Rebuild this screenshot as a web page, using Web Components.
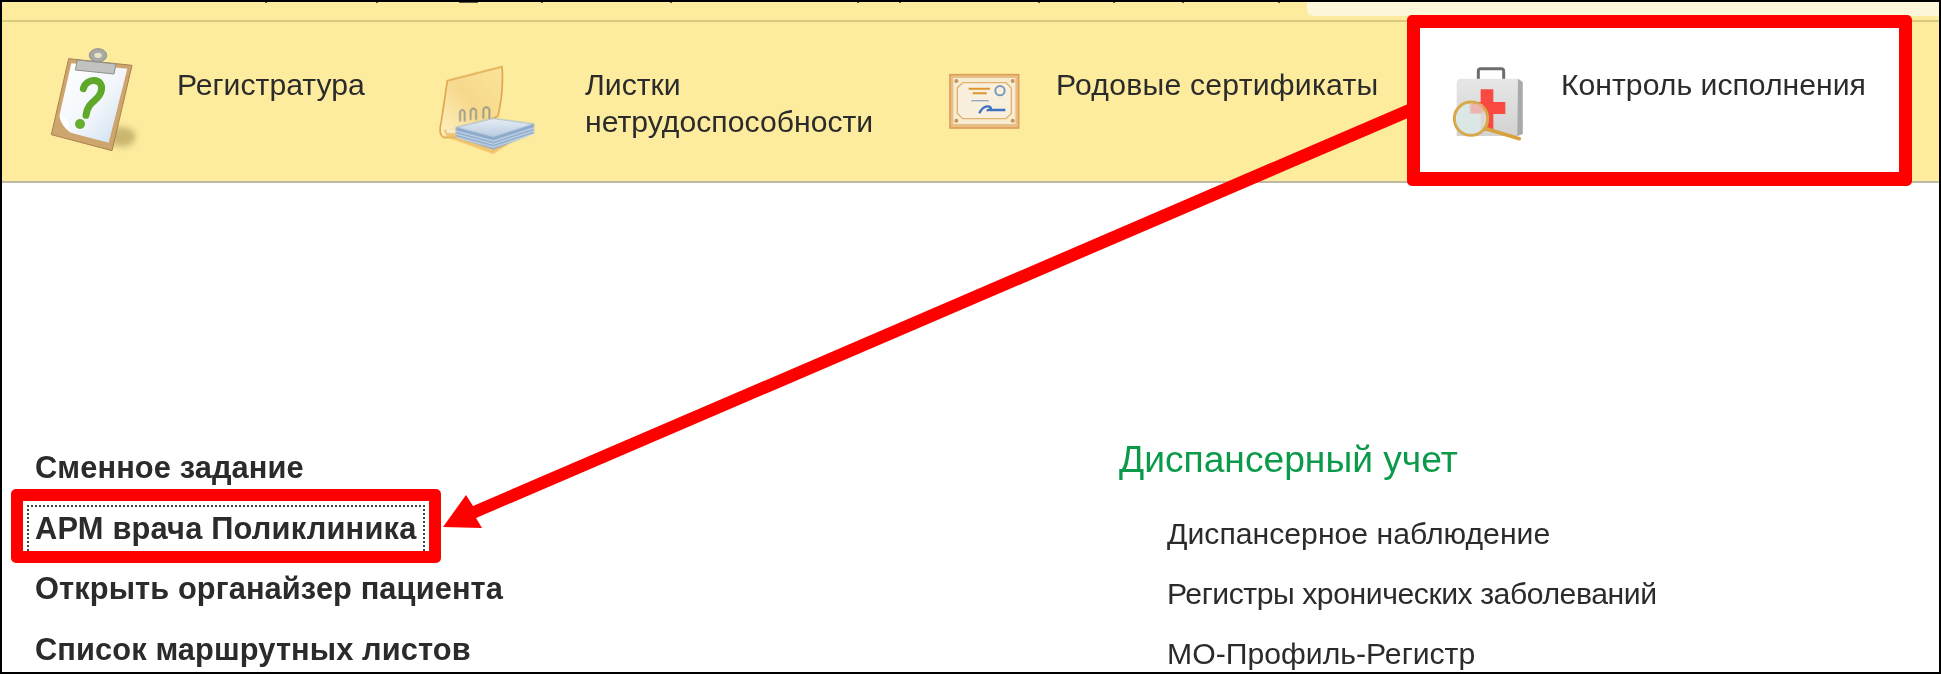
<!DOCTYPE html>
<html lang="ru"><head><meta charset="utf-8"><title>Контроль исполнения</title>
<style>
html,body{margin:0;background:#fff}
body{font-family:"Liberation Sans",Arial,sans-serif;color:#2b2b2b}
</style></head>
<body>
<app-frame>
  <top-strip></top-strip>
  <section-bar>
    <section-item basis="410" gap="27" top="18" label="Регистратура">
      <svg slot="icon" width="130" height="120" viewBox="0 0 390 360">
        <defs>
          <linearGradient id="pa" x1="0" y1="0" x2="1" y2="1"><stop offset="0" stop-color="#fff"/><stop offset=".55" stop-color="#f2f6fb"/><stop offset="1" stop-color="#c9ddee"/></linearGradient>
          <filter id="b1" x="-10%" y="-10%" width="120%" height="120%"><feGaussianBlur stdDeviation="2.2"/></filter>
          <filter id="b2" x="-30%" y="-30%" width="160%" height="160%"><feGaussianBlur stdDeviation="9"/></filter>
        </defs>
        <ellipse cx="305" cy="290" rx="42" ry="30" fill="#b9a461" opacity=".75" filter="url(#b2)"/>
        <g filter="url(#b1)">
          <path d="M146 56 L336 76 L276 332 L94 284 Z" fill="#cfa56e" stroke="#a9824f" stroke-width="3"/>
          <path d="M154 70 L322 86 L266 308 L152 278 Q148 250 118 228 Z" fill="url(#pa)"/>
          <path d="M118 228 Q148 232 148 262 L152 278 Q124 260 118 228Z" fill="#fff"/>
          <ellipse cx="234" cy="46" rx="26" ry="20" fill="#a9a9a5" stroke="#8d8d8a" stroke-width="3"/>
          <ellipse cx="234" cy="46" rx="11" ry="8" fill="#e8e4c8"/>
          <path d="M172 60 L288 72 L282 102 L166 90 Z" fill="#c2c2be" stroke="#8f8f8b" stroke-width="3"/>
          <path d="M190 146 C198 112 252 112 244 152 C238 184 204 180 198 226" fill="none" stroke="#5fa82c" stroke-width="21" stroke-linecap="round"/>
          <circle cx="180" cy="252" r="15" fill="#65ad2f"/>
        </g>
      </svg>
    </section-item>
    <section-item basis="510" gap="45" top="28" label="Листки нетрудоспособности">
      <svg slot="icon" width="110" height="110" viewBox="0 0 330 330">
        <defs>
          <linearGradient id="fo" x1="0" y1="1" x2="1" y2="0"><stop offset="0" stop-color="#fff1c4"/><stop offset=".5" stop-color="#f7d98c"/><stop offset="1" stop-color="#fbe49a"/></linearGradient>
          <linearGradient id="nb" x1="0" y1="0" x2="0" y2="1"><stop offset="0" stop-color="#e8eff5"/><stop offset="1" stop-color="#b7cbe0"/></linearGradient>
        </defs>
        <g filter="url(#b1)">
          <path d="M52 92 L216 50 Q222 120 204 198 L90 262 L40 262 Q24 250 34 214 Z" fill="url(#fo)" stroke="#e0a650" stroke-width="5" stroke-linejoin="round"/>
          <path d="M40 240 L52 262 L190 312 L312 232 L298 226 Z" fill="#ecb55e" opacity=".75"/>
          <path d="M78 232 L190 205 L312 222 L312 252 L190 298 L78 262 Z" fill="#8aa9cc"/>
          <path d="M78 232 L190 205 L312 222 L190 262 Z" fill="url(#nb)" stroke="#8ea9c6" stroke-width="2"/>
          <path d="M78 243 L190 273 L312 233 M78 252 L190 282 L312 242 M78 261 L190 291 L312 251" fill="none" stroke="#dfe8f1" stroke-width="3"/>
          <path d="M90 214 V186 Q97 172 104 186 V214 M122 210 V182 Q130 168 138 182 V210 M160 206 V178 Q169 164 178 178 V206" fill="none" stroke="#8f9188" stroke-width="5"/>
          <path d="M50 244 H76" stroke="#f7f1d6" stroke-width="9"/>
        </g>
      </svg>
    </section-item>
    <section-item basis="480" gap="26" top="38" label="Родовые сертификаты" spacing=".22">
      <svg slot="icon" width="90" height="80" viewBox="0 0 270 240">
        <g filter="url(#b1)">
          <rect x="30" y="44" width="206" height="160" fill="#eabf86" stroke="#dc9f5a" stroke-width="5"/>
          <rect x="40" y="54" width="186" height="138" fill="#f5ecd2"/>
          <path d="M68 68 H198 L214 84 V160 L198 176 H68 L52 160 V84 Z" fill="#f8f0dc" stroke="#e5b06b" stroke-width="4"/>
          <path d="M86 86 H150 M98 100 H140" stroke="#dc9432" stroke-width="6"/>
          <path d="M94 122 H146" stroke="#93a5bf" stroke-width="4"/>
          <circle cx="180" cy="92" r="14" fill="none" stroke="#7d99ba" stroke-width="6"/>
          <path d="M118 160 Q130 135 148 140 Q160 146 140 152 M148 150 H196" fill="none" stroke="#3e71c4" stroke-width="7"/>
          <circle cx="49" cy="63" r="6" fill="#c89459"/><circle cx="218" cy="63" r="6" fill="#c89459"/>
          <circle cx="49" cy="182" r="6" fill="#c89459"/><circle cx="218" cy="182" r="6" fill="#c89459"/>
        </g>
      </svg>
    </section-item>
    <section-item highlight basis="480" lead="20" gap="31" top="38" label="Контроль исполнения">
      <svg slot="icon" width="90" height="90" viewBox="0 0 270 270">
        <defs><linearGradient id="kt" x1="0" y1="0" x2="0" y2="1"><stop offset="0" stop-color="#e6e6e6"/><stop offset="1" stop-color="#d2d2d2"/></linearGradient></defs>
        <g filter="url(#b1)">
          <rect x="115" y="26" width="76" height="40" rx="7" fill="none" stroke="#6d6d6d" stroke-width="9"/>
          <path d="M50 70 Q50 56 64 56 H234 L248 66 V222 L232 228 H50 Z" fill="url(#kt)"/>
          <path d="M234 56 L248 66 V222 L232 228 Z" fill="#a9a9a9"/>
          <path d="M122 88 H160 V126 H196 V162 H160 V212 H122 V162 H88 V126 H122 Z" fill="#f9493f"/>
          <path d="M138 206 L238 236" stroke="#d8a13c" stroke-width="11" stroke-linecap="round"/>
          <circle cx="93" cy="176" r="50" fill="#dbe9e7" fill-opacity=".88" stroke="#d8a94c" stroke-width="9"/>
          <path d="M92 132 H128 V160 H92 Z" fill="#f4a6a0" opacity=".7"/>
        </g>
      </svg>
    </section-item>
  </section-bar>
  <content-area>
    <link-column>
      <strong-link>Сменное задание</strong-link>
      <strong-link focused>АРМ врача Поликлиника</strong-link>
      <strong-link>Открыть органайзер пациента</strong-link>
      <strong-link>Список маршрутных листов</strong-link>
    </link-column>
    <link-group heading="Диспансерный учет">
      <plain-link>Диспансерное наблюдение</plain-link>
      <plain-link tight>Регистры хронических заболеваний</plain-link>
      <plain-link>МО-Профиль-Регистр</plain-link>
    </link-group>
  </content-area>
  <call-out></call-out>
</app-frame>
<script>
function def(name,css,html,init){
  customElements.define(name,class extends HTMLElement{
    constructor(){super();const r=this.attachShadow({mode:'open'});r.innerHTML='<style>'+css+'</style>'+(typeof html==='function'?html(this):html);}
    connectedCallback(){if(init)init(this)}
  });
}
const ticks=[[263,2],[374,2],[457,19],[539,2],[668,2],[855,2],[897,2],[1036,2],[1111,2],[1180,2],[1276,2],[1343,2]];
def('app-frame',`:host{display:block;position:relative;box-sizing:border-box;width:1941px;height:674px;border:2px solid #000;overflow:hidden;background:#fff}`,'<slot></slot>');
def('top-strip',`:host{display:flex;justify-content:flex-end;height:18px;background-color:#fdec9e;background-repeat:no-repeat;border-bottom:2px solid #d9ca7e}
 .tab{width:632px;height:14px;background:#fdf6d8;border-bottom-left-radius:6px}`,'<div class="tab"></div>',
 h=>{h.style.backgroundImage=ticks.map(()=>'linear-gradient(#555,#555)').join(',');
     h.style.backgroundSize=ticks.map(t=>t[1]+'px 1px').join(',');
     h.style.backgroundPosition=ticks.map(t=>t[0]+'px 0').join(',');});
def('section-bar',`:host{display:flex;box-sizing:border-box;height:161px;padding-left:18px;background:#fdec9e;border-bottom:2px solid #bdb9a3}`,'<slot></slot>');
def('section-item',`:host{display:flex;flex:none;align-items:flex-start;box-sizing:border-box;width:var(--basis);padding-left:var(--lead,0);font-size:30.2px;line-height:37px}
 :host([highlight]){background:#fff}
 .icon{flex:none;display:flex;margin-top:var(--top);margin-right:var(--gap)}
 .label{margin-top:44px;filter:blur(.45px)}`,
 h=>'<div class="icon"><slot name="icon"></slot></div><div class="label"></div>',
 h=>{h.style.setProperty('--basis',h.getAttribute('basis')+'px');
     h.style.setProperty('--gap',h.getAttribute('gap')+'px');
     h.style.setProperty('--top',h.getAttribute('top')+'px');
     if(h.hasAttribute('lead'))h.style.setProperty('--lead',h.getAttribute('lead')+'px');
     const l=h.shadowRoot.querySelector('.label');l.textContent=h.getAttribute('label');
     if(h.hasAttribute('spacing'))l.style.letterSpacing=h.getAttribute('spacing')+'px';
     if(l.textContent.startsWith('Листки'))l.style.width='300px';});
def('content-area',`:host{display:flex;padding:254px 0 0 31px;filter:blur(.45px)}`,'<slot></slot>');
def('link-column',`:host{display:flex;flex-direction:column;width:1086px}`,'<slot></slot>');
def('strong-link',`:host{display:flex;align-items:center;height:60.5px;font-weight:700;font-size:30.8px;letter-spacing:.1px}
 span{display:inline-flex;align-items:center;box-sizing:border-box;height:46px;padding:0 6px;margin-left:-6px;border:2px dotted transparent;border-width:2px 2px 0}
 :host([focused]) span{border-color:#444;letter-spacing:.2px}`,'<span><slot></slot></span>');
def('link-group',`:host{display:flex;flex-direction:column;margin-top:-3px}
 h2{margin:0 0 20px;font-weight:400;font-size:37.2px;line-height:50px;color:#0b9a4a}
 .items{display:flex;flex-direction:column;padding-left:48px}`,
 h=>'<h2>'+h.getAttribute('heading')+'</h2><div class="items"><slot></slot></div>');
def('plain-link',`:host{display:block;height:60px;line-height:60px;font-size:30.2px;white-space:nowrap}
 :host([tight]){letter-spacing:-.45px}`,'<slot></slot>');
def('call-out',`:host{position:absolute;inset:0;display:block;pointer-events:none}
 .box{position:absolute;box-sizing:border-box;border:12px solid #f00;border-radius:5px}
 .a{left:1405px;top:13px;width:505px;height:171px;border-width:13px 13px 14px}
 .b{left:9px;top:487px;width:430px;height:74px}
 svg{position:absolute;left:0;top:0}`,
 `<svg width="1937" height="670" viewBox="2 2 1937 670"><path d="M1408 104 L473 506 L466 495 L443 527 L482 528 L476 518 L1408 118 Z" fill="#f00"/></svg><div class="box a"></div><div class="box b"></div>`);
</script>
</body></html>
